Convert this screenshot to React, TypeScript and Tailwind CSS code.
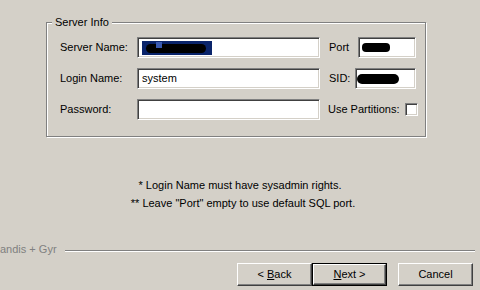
import React from "react";

const sunken =
  "border border-t-[#808080] border-l-[#808080] border-r-white border-b-white shadow-[inset_1px_1px_0_#404040,inset_-1px_-1px_0_#d4d0c8] bg-white";

const raised =
  "border border-t-white border-l-white border-r-[#404040] border-b-[#404040] shadow-[inset_-1px_-1px_0_#808080] bg-[#d4d0c8]";

function Field({ className, children }: { className: string; children?: React.ReactNode }) {
  return <div className={`${sunken} ${className} h-[21px] flex items-center pl-[4px]`}>{children}</div>;
}

function Button({ children, isDefault }: { children: React.ReactNode; isDefault?: boolean }) {
  if (isDefault) {
    return (
      <div className="w-[75px] h-[23px] border border-black">
        <div className={`${raised} w-full h-full flex items-center justify-center`}>{children}</div>
      </div>
    );
  }
  return (
    <div className={`${raised} w-[75px] h-[23px] flex items-center justify-center`}>{children}</div>
  );
}

export default function App() {
  return (
    <main
      className="w-[480px] h-[290px] bg-[#d4d0c8] text-black text-[11px] leading-[13px] overflow-hidden flex flex-col"
      style={{ fontFamily: '"Liberation Sans", Arial, sans-serif' }}
    >
      {/* Server Info group */}
      <div className="relative ml-[46px] mt-[22px] w-[380px] h-[115px] border border-[#808080] shadow-[1px_1px_0_#fff,inset_1px_1px_0_#fff] pt-[14px] pl-[13px] pr-[9px] flex flex-col gap-[10px]">
        <span className="absolute left-[5px] -top-[7px] px-[3px] bg-[#d4d0c8]">Server Info</span>

        <div className="flex items-center">
          <span className="w-[77px]">Server Name:</span>
          <Field className="w-[183px]">
            <span className="relative w-[70px] h-[14px] bg-[#0a246a]">
              <span className="absolute left-[4px] top-[3px] w-[60px] h-[9px] rounded-full bg-black" />
              <span className="absolute left-[14px] top-[1px] w-[6px] h-[6px] bg-[#3a5ab0]" />
            </span>
          </Field>
          <span className="ml-[9px]">Port</span>
          <Field className="w-[58px] ml-auto">
            <span className="w-[28px] h-[9px] rounded-[4px] bg-black -ml-[1px]" />
          </Field>
        </div>

        <div className="flex items-center">
          <span className="w-[77px]">Login Name:</span>
          <Field className="w-[183px]">system</Field>
          <span className="ml-[9px]">SID:</span>
          <Field className="w-[61px] ml-auto">
            <span className="w-[42px] h-[10px] rounded-full bg-black -ml-[3px]" />
          </Field>
        </div>

        <div className="flex items-center">
          <span className="w-[77px]">Password:</span>
          <Field className="w-[183px]" />
          <span className="ml-[8px]">Use Partitions:</span>
          <div className={`${sunken} w-[13px] h-[13px] ml-auto -mr-[2px]`} />
        </div>
      </div>

      {/* Notes */}
      <div className="mt-[39px] flex flex-col items-center leading-[18px]">
        <p>* Login Name must have sysadmin rights.</p>
        <p className="pl-[6px]">** Leave "Port" empty to use default SQL port.</p>
      </div>

      {/* Branding separator */}
      <div className="mt-[29px] h-[16px] flex items-center">
        <span className="text-[#808080] pr-[8px]">andis + Gyr</span>
        <div className="flex-1 mr-[5px] h-[2px] border-t border-[#808080] border-b border-b-white mt-[3px]" />
      </div>

      {/* Buttons */}
      <div className="mt-[6px] flex justify-end pr-[7px]">
        <Button>
          &lt; <span className="underline ml-[3px]">B</span>ack
        </Button>
        <Button isDefault>
          <span className="underline">N</span>ext &gt;
        </Button>
        <div className="w-[11px]" />
        <Button>Cancel</Button>
      </div>
    </main>
  );
}
